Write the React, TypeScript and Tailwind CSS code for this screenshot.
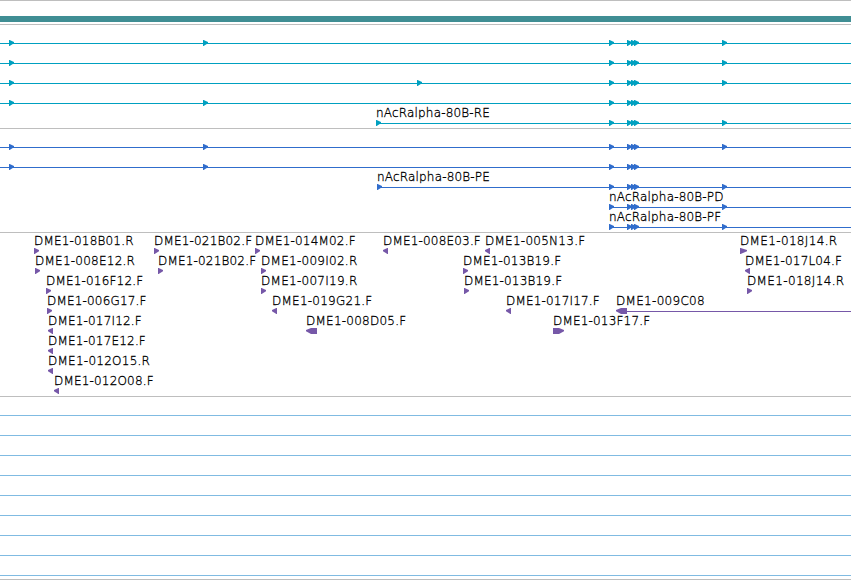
import React from 'react';

type Direction = 'left' | 'right';

interface Glyph {
  x: number;
  width?: number;
  dir?: Direction;
}

interface Label {
  x: number;
  text: string;
  spacing?: number;
}

interface RowData {
  // start of the horizontal line, left out for rows without one
  line?: number;
  glyphs: Glyph[];
  labels?: Label[];
}

const at = (...xs: number[]): Glyph[] => xs.map((x) => ({ x }));

const EXONS = [609, 627, 631, 634];

const transcripts: RowData[] = [
  { line: 0, glyphs: at(9, 203, ...EXONS, 722) },
  { line: 0, glyphs: at(9, ...EXONS, 722) },
  { line: 0, glyphs: at(9, 417, ...EXONS, 722) },
  { line: 0, glyphs: at(9, 203, ...EXONS) },
  { line: 376, glyphs: at(376, ...EXONS, 722), labels: [{ x: 376, text: 'nAcRalpha-80B-RE' }] },
];

const proteins: RowData[] = [
  { line: 0, glyphs: at(9, 203, ...EXONS, 722) },
  { line: 0, glyphs: at(9, 203, ...EXONS) },
  { line: 377, glyphs: at(377, ...EXONS, 722), labels: [{ x: 377, text: 'nAcRalpha-80B-PE' }] },
  { line: 609, glyphs: at(...EXONS, 722), labels: [{ x: 609, text: 'nAcRalpha-80B-PD' }] },
  { line: 609, glyphs: at(...EXONS, 722), labels: [{ x: 609, text: 'nAcRalpha-80B-PF' }] },
];

const clones: RowData[] = [
  {
    glyphs: [{ x: 34 }, { x: 154 }, { x: 255 }, { x: 383, dir: 'left' }, { x: 485, dir: 'left' }, { x: 740, width: 7 }],
    labels: [
      { x: 34, text: 'DME1-018B01.R' },
      { x: 154, text: 'DME1-021B02.F' },
      { x: 255, text: 'DME1-014M02.F' },
      { x: 383, text: 'DME1-008E03.F' },
      { x: 485, text: 'DME1-005N13.F', spacing: 0.26 },
      { x: 740, text: 'DME1-018J14.R', spacing: 0.35 },
    ],
  },
  {
    glyphs: [{ x: 35 }, { x: 158 }, { x: 261 }, { x: 463 }, { x: 745, dir: 'left' }],
    labels: [
      { x: 35, text: 'DME1-008E12.R', spacing: 0.24 },
      { x: 158, text: 'DME1-021B02.F' },
      { x: 261, text: 'DME1-009I02.R', spacing: 0.27 },
      { x: 463, text: 'DME1-013B19.F' },
      { x: 745, text: 'DME1-017L04.F' },
    ],
  },
  {
    glyphs: [{ x: 46 }, { x: 261 }, { x: 464 }, { x: 747 }],
    labels: [
      { x: 46, text: 'DME1-016F12.F' },
      { x: 261, text: 'DME1-007I19.R', spacing: 0.27 },
      { x: 464, text: 'DME1-013B19.F' },
      { x: 747, text: 'DME1-018J14.R', spacing: 0.35 },
    ],
  },
  {
    line: 620,
    glyphs: [{ x: 47 }, { x: 272, dir: 'left' }, { x: 506, dir: 'left' }, { x: 616, width: 11, dir: 'left' }],
    labels: [
      { x: 47, text: 'DME1-006G17.F' },
      { x: 272, text: 'DME1-019G21.F', spacing: 0.24 },
      { x: 506, text: 'DME1-017I17.F' },
      { x: 616, text: 'DME1-009C08', spacing: 0.3 },
    ],
  },
  {
    glyphs: [{ x: 48, dir: 'left' }, { x: 306, width: 11, dir: 'left' }, { x: 553, width: 11 }],
    labels: [
      { x: 48, text: 'DME1-017I12.F' },
      { x: 306, text: 'DME1-008D05.F', spacing: 0.24 },
      { x: 553, text: 'DME1-013F17.F' },
    ],
  },
  { glyphs: [{ x: 48, dir: 'left' }], labels: [{ x: 48, text: 'DME1-017E12.F' }] },
  { glyphs: [{ x: 48, dir: 'left' }], labels: [{ x: 48, text: 'DME1-012O15.R', spacing: 0.25 }] },
  { glyphs: [{ x: 54, dir: 'left' }], labels: [{ x: 54, text: 'DME1-012O08.F' }] },
];

const emptyRows: RowData[] = Array.from({ length: 9 }, () => ({ line: 0, glyphs: [] }));

const Arrow: React.FC<Glyph> = ({ x, width = 5, dir = 'right' }) => {
  // wide glyphs are a block with a pointed end
  const body = width > 7 ? width - 5 : 0.6;
  return (
    <svg
      className={`absolute top-[15px] h-1.5 ${dir === 'left' ? '-scale-x-100' : ''}`}
      style={{ left: x }}
      width={width}
      height={6}
      viewBox={`0 0 ${width} 6`}
      fill="currentColor"
    >
      <path d={`M0 0H${body}L${width} 2V3.2L${body} 6H0Z`} />
    </svg>
  );
};

const Row: React.FC<{ row: RowData }> = ({ row }) => (
  <div className="relative h-5">
    {row.line !== undefined && (
      <div className="absolute top-[18px] right-0 h-px bg-current" style={{ left: row.line }} />
    )}
    {row.glyphs.map((glyph) => (
      <Arrow key={glyph.x} {...glyph} />
    ))}
    {row.labels?.map((label) => (
      <span
        key={label.x}
        className="absolute top-0 text-xs leading-4 font-extralight whitespace-nowrap text-black [-webkit-text-stroke:0.3px_black]"
        style={{ left: label.x, letterSpacing: label.spacing ?? 0.18 }}
      >
        {label.text}
      </span>
    ))}
  </div>
);

const Track: React.FC<{ rows: RowData[]; className: string }> = ({ rows, className }) => (
  <section className={`border-t border-[#bebebe] ${className}`}>
    {rows.map((row, i) => (
      <Row key={i} row={row} />
    ))}
  </section>
);

export default function App() {
  return (
    <main className="flex h-[580px] w-[851px] flex-col overflow-hidden bg-white font-['DejaVu_Sans',sans-serif]">
      <div className="h-6 border-t border-[#bebebe] pt-[15px]">
        <div className="h-1.5 bg-[#408e94]" />
      </div>
      <Track rows={transcripts} className="h-[104px] text-[#00a0c0]" />
      <Track rows={proteins} className="h-[104px] text-[#306dcc]" />
      <Track rows={clones} className="h-[164px] text-[#7658a8]" />
      <Track rows={emptyRows} className="h-[183px] text-[#80bbe2]" />
      <div className="h-px bg-[#bebebe]" />
    </main>
  );
}
